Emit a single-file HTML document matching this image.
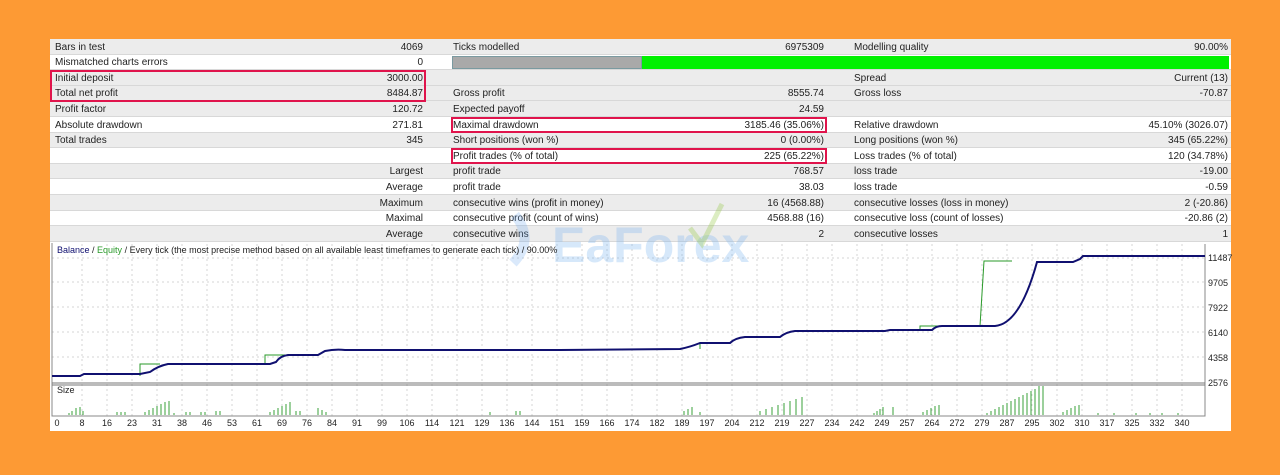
<!DOCTYPE html>
<html><head><meta charset="utf-8"><style>
body{margin:0;width:1280px;height:475px;background:#fd9a34;overflow:hidden;font-family:"Liberation Sans",sans-serif;}
#p{position:absolute;left:50px;top:39px;width:1181px;height:392px;background:#fff;}
.r{position:absolute;left:0;width:1181px;height:15.6px;font-size:10px;color:#222;border-bottom:1px solid #d8d8d8;box-sizing:border-box}
.g{background:#ececec}
.r span{position:absolute;top:2.5px;white-space:nowrap}
.box{position:absolute;border:2px solid #e0144c;box-sizing:border-box}
</style></head><body>
<div id="p">
<div class="r g" style="top:0"><span style="left:5px">Bars in test</span><span style="right:808px">4069</span><span style="left:403px">Ticks modelled</span><span style="right:407px">6975309</span><span style="left:804px">Modelling quality</span><span style="right:3px">90.00%</span></div>
<div class="r" style="top:15.6px"><span style="left:5px">Mismatched charts errors</span><span style="right:808px">0</span>
<div style="position:absolute;left:402px;top:1px;width:190px;height:13px;background:#a9a9a9;border:1px solid #7a9aa0;box-sizing:border-box"></div>
<div style="position:absolute;left:592px;top:1px;width:587px;height:13px;background:#00f000"></div></div>
<div class="r g" style="top:31.2px"><span style="left:5px">Initial deposit</span><span style="right:808px">3000.00</span><span style="left:804px">Spread</span><span style="right:3px">Current (13)</span></div>
<div class="r g" style="top:46.8px"><span style="left:5px">Total net profit</span><span style="right:808px">8484.87</span><span style="left:403px">Gross profit</span><span style="right:407px">8555.74</span><span style="left:804px">Gross loss</span><span style="right:3px">-70.87</span></div>
<div class="r g" style="top:62.4px"><span style="left:5px">Profit factor</span><span style="right:808px">120.72</span><span style="left:403px">Expected payoff</span><span style="right:407px">24.59</span></div>
<div class="r" style="top:78px"><span style="left:5px">Absolute drawdown</span><span style="right:808px">271.81</span><span style="left:403px">Maximal drawdown</span><span style="right:407px">3185.46 (35.06%)</span><span style="left:804px">Relative drawdown</span><span style="right:3px">45.10% (3026.07)</span></div>
<div class="r g" style="top:93.6px"><span style="left:5px">Total trades</span><span style="right:808px">345</span><span style="left:403px">Short positions (won %)</span><span style="right:407px">0 (0.00%)</span><span style="left:804px">Long positions (won %)</span><span style="right:3px">345 (65.22%)</span></div>
<div class="r" style="top:109.2px"><span style="left:403px">Profit trades (% of total)</span><span style="right:407px">225 (65.22%)</span><span style="left:804px">Loss trades (% of total)</span><span style="right:3px">120 (34.78%)</span></div>
<div class="r g" style="top:124.8px"><span style="right:808px">Largest</span><span style="left:403px">profit trade</span><span style="right:407px">768.57</span><span style="left:804px">loss trade</span><span style="right:3px">-19.00</span></div>
<div class="r" style="top:140.4px"><span style="right:808px">Average</span><span style="left:403px">profit trade</span><span style="right:407px">38.03</span><span style="left:804px">loss trade</span><span style="right:3px">-0.59</span></div>
<div class="r g" style="top:156px"><span style="right:808px">Maximum</span><span style="left:403px">consecutive wins (profit in money)</span><span style="right:407px">16 (4568.88)</span><span style="left:804px">consecutive losses (loss in money)</span><span style="right:3px">2 (-20.86)</span></div>
<div class="r" style="top:171.6px"><span style="right:808px">Maximal</span><span style="left:403px">consecutive profit (count of wins)</span><span style="right:407px">4568.88 (16)</span><span style="left:804px">consecutive loss (count of losses)</span><span style="right:3px">-20.86 (2)</span></div>
<div class="r g" style="top:187.2px"><span style="right:808px">Average</span><span style="left:403px">consecutive wins</span><span style="right:407px">2</span><span style="left:804px">consecutive losses</span><span style="right:3px">1</span></div>
<div class="box" style="left:0;top:31px;width:376px;height:32px"></div>
<div class="box" style="left:401px;top:78px;width:376px;height:16px"></div>
<div class="box" style="left:401px;top:109px;width:376px;height:16px"></div>
</div>
<svg style="position:absolute;left:0;top:0" width="1280" height="475">
<g stroke="#d4d4d4" stroke-dasharray="2,3" stroke-width="1">
<path d="M52 258H1205M52 282H1205M52 307H1205M52 332H1205M52 357H1205"/>
<path d="M82 244V416M107 244V416M132 244V416M157 244V416M182 244V416M207 244V416M232 244V416M257 244V416M282 244V416M307 244V416M332 244V416M357 244V416M382 244V416M407 244V416M432 244V416M457 244V416M482 244V416M507 244V416M532 244V416M557 244V416M582 244V416M607 244V416M632 244V416M657 244V416M682 244V416M707 244V416M732 244V416M757 244V416M782 244V416M807 244V416M832 244V416M857 244V416M882 244V416M907 244V416M932 244V416M957 244V416M982 244V416M1007 244V416M1032 244V416M1057 244V416M1082 244V416M1107 244V416M1132 244V416M1157 244V416M1182 244V416"/>
</g>
<path d="M52 243V416H1205V244" fill="none" stroke="#888" stroke-width="1"/>
<path d="M52 383H1205M52 385H1205" stroke="#777" stroke-width="1"/>
<text x="552" y="262" font-family="Liberation Sans,sans-serif" font-weight="bold" font-size="50" fill="#7ab4f0" opacity="0.3">EaForex</text>
<path d="M515 215q20 25 -2 48" stroke="#6aa8f0" stroke-width="10" fill="none" opacity="0.25"/>
<path d="M690 228l12 16 20-40" stroke="#9ccc50" stroke-width="5" fill="none" opacity="0.35"/>
<path d="M140 376V364H160M265 364V355H285M700 349V343H720M920 331V326H945M980 326L984 261H1012" fill="none" stroke="#2a9a2a" stroke-width="1"/>
<path d="M52 376H80L84 374H140L150 372Q158 366 168 364H270L276 362Q280 356 288 355H318L325 351Q335 349 345 350H560L680 349Q690 347 700 343H730Q735 338 745 337H780Q786 332 795 331H885L890 330H932Q936 326 942 326H995Q1020 324 1037 262H1073L1080 259L1083 256H1205" fill="none" stroke="#101070" stroke-width="2"/>
<path d="M69 415v-2M72 415v-4M76 415v-7M80 415v-8M83 415v-4M117 415v-3M121 415v-3M125 415v-3M145 415v-3M149 415v-5M153 415v-7M157 415v-9M161 415v-11M165 415v-13M169 415v-14M174 415v-2M186 415v-3M190 415v-3M201 415v-3M205 415v-3M216 415v-4M220 415v-4M270 415v-3M274 415v-5M278 415v-7M282 415v-9M286 415v-11M290 415v-13M296 415v-4M300 415v-4M318 415v-7M322 415v-5M326 415v-3M490 415v-3M516 415v-4M520 415v-4M684 415v-4M688 415v-6M692 415v-8M700 415v-3M760 415v-4M766 415v-6M772 415v-8M778 415v-10M784 415v-12M790 415v-14M796 415v-16M802 415v-18M874 415v-2M877 415v-4M880 415v-6M883 415v-8M893 415v-8M923 415v-3M927 415v-5M931 415v-7M935 415v-9M939 415v-10M987 415v-2M991 415v-4M995 415v-6M999 415v-8M1003 415v-10M1007 415v-12M1011 415v-14M1015 415v-16M1019 415v-18M1023 415v-20M1027 415v-22M1031 415v-24M1035 415v-26M1039 415v-29M1043 415v-29M1063 415v-3M1067 415v-5M1071 415v-7M1075 415v-9M1079 415v-10M1098 415v-2M1114 415v-2M1136 415v-2M1150 415v-2M1162 415v-2M1178 415v-2" stroke="#3aa03a" stroke-width="1"/>
<g font-family="Liberation Sans,sans-serif" font-size="9" fill="#222">
<text x="57" y="253"><tspan fill="#101070">Balance</tspan> / <tspan fill="#2a9a2a">Equity</tspan> / Every tick (the most precise method based on all available least timeframes to generate each tick) / 90.00%</text>
<text x="57" y="393">Size</text>
<text x="1208" y="261">11487</text><text x="1208" y="286">9705</text><text x="1208" y="311">7922</text><text x="1208" y="336">6140</text><text x="1208" y="361">4358</text><text x="1208" y="386">2576</text>
<g text-anchor="middle">
<text x="57" y="426">0</text><text x="82" y="426">8</text><text x="107" y="426">16</text><text x="132" y="426">23</text><text x="157" y="426">31</text><text x="182" y="426">38</text><text x="207" y="426">46</text><text x="232" y="426">53</text><text x="257" y="426">61</text><text x="282" y="426">69</text><text x="307" y="426">76</text><text x="332" y="426">84</text><text x="357" y="426">91</text><text x="382" y="426">99</text><text x="407" y="426">106</text><text x="432" y="426">114</text><text x="457" y="426">121</text><text x="482" y="426">129</text><text x="507" y="426">136</text><text x="532" y="426">144</text><text x="557" y="426">151</text><text x="582" y="426">159</text><text x="607" y="426">166</text><text x="632" y="426">174</text><text x="657" y="426">182</text><text x="682" y="426">189</text><text x="707" y="426">197</text><text x="732" y="426">204</text><text x="757" y="426">212</text><text x="782" y="426">219</text><text x="807" y="426">227</text><text x="832" y="426">234</text><text x="857" y="426">242</text><text x="882" y="426">249</text><text x="907" y="426">257</text><text x="932" y="426">264</text><text x="957" y="426">272</text><text x="982" y="426">279</text><text x="1007" y="426">287</text><text x="1032" y="426">295</text><text x="1057" y="426">302</text><text x="1082" y="426">310</text><text x="1107" y="426">317</text><text x="1132" y="426">325</text><text x="1157" y="426">332</text><text x="1182" y="426">340</text>
</g></g>
</svg>
</body></html>
